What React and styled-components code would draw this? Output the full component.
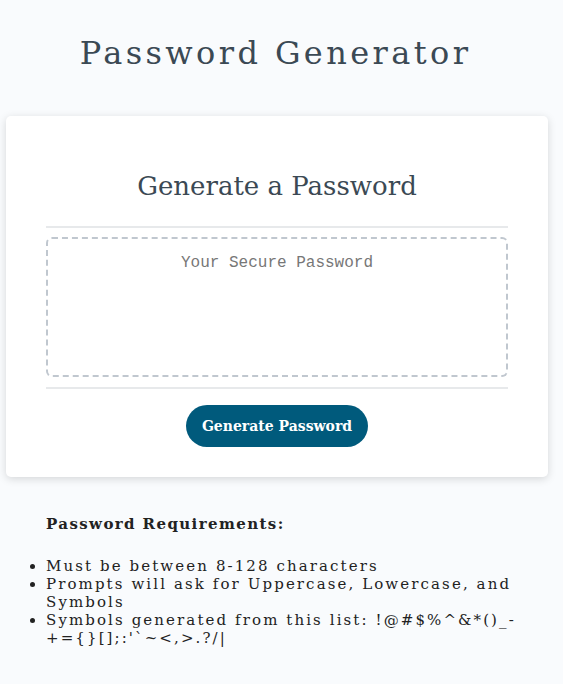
import React from 'react';
import styled, { createGlobalStyle } from 'styled-components';

const GlobalStyle = createGlobalStyle`
  body {
    margin: 0;
    background-color: #f9fbfd;
    font-family: "DejaVu Serif", "Liberation Serif", serif;
  }
`;

const Wrapper = styled.div`
  display: flex;
  flex-direction: column;
  padding-top: 30px;
`;

const Header = styled.header`
  text-align: center;
  color: hsl(206, 17%, 28%);
`;

const Title = styled.h1`
  margin: 0;
  font-size: 32px;
  font-weight: normal;
  letter-spacing: 3.4px;
  line-height: 46px;
  padding-right: 12px;
`;

const Card = styled.div`
  box-sizing: border-box;
  width: 542px;
  margin: 40px 0 0 6px;
  padding: 30px 40px;
  background-color: #fff;
  border-radius: 5px;
  box-shadow: rgba(0, 0, 0, 0.15) 0px 2px 8px 0px;
  color: hsl(206, 17%, 28%);
`;

const Divider = styled.div`
  height: 2px;
  background: #e7e9eb;
`;

const CardTitle = styled.h2`
  margin: 22px 0 22px;
  text-align: center;
  font-size: 26px;
  font-weight: normal;
  line-height: 36px;
`;

const PasswordBox = styled.textarea`
  appearance: none;
  display: block;
  box-sizing: border-box;
  width: 100%;
  height: 140px;
  margin: 9px 0 10px;
  padding: 15px;
  border: 2px dashed #c0c7cf;
  border-radius: 6px;
  resize: none;
  overflow: hidden;
  text-align: center;
  font-family: "Liberation Mono", "Courier New", monospace;
  font-size: 16px;

  &::placeholder {
    color: #777;
  }
`;

const Footer = styled.div`
  display: flex;
  justify-content: center;
  padding: 16px 0 0;
`;

const GenerateButton = styled.button`
  border: none;
  border-radius: 21px;
  background-color: #005a7c;
  color: #fff;
  height: 42px;
  padding: 0 16px;
  font-family: "DejaVu Serif", serif;
  font-size: 14px;
  font-weight: bold;
  cursor: pointer;
`;

const Requirements = styled.section`
  padding: 38px 0 0 46px;
  color: #222;
  font-size: 15px;
  letter-spacing: 2.1px;
  line-height: 18px;
`;

const ReqTitle = styled.p`
  margin: 0 0 24px;
  font-weight: bold;
  letter-spacing: 1.4px;
`;

const ReqList = styled.ul`
  margin: 0;
  padding: 0;
  width: 470px;
`;

export default function App() {
  return (
    <>
      <GlobalStyle />
      <Wrapper>
        <Header>
          <Title>Password Generator</Title>
        </Header>
        <Card>
          <CardTitle>Generate a Password</CardTitle>
          <Divider />
          <PasswordBox readOnly placeholder="Your Secure Password" />
          <Divider />
          <Footer>
            <GenerateButton>Generate Password</GenerateButton>
          </Footer>
        </Card>
        <Requirements>
          <ReqTitle>Password Requirements:</ReqTitle>
          <ReqList>
            <li>Must be between 8-128 characters</li>
            <li>Prompts will ask for Uppercase, Lowercase, and Symbols</li>
            <li>Symbols generated from this list: !@#$%^&amp;*()_-+={'{}'}[];:'`~&lt;,&gt;.?/|</li>
          </ReqList>
        </Requirements>
      </Wrapper>
    </>
  );
}
